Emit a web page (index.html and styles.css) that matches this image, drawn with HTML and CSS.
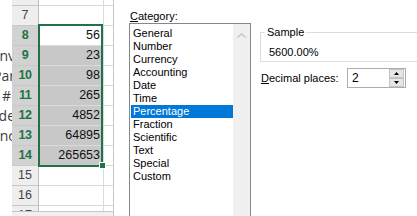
FILE: index.html
```html
<!DOCTYPE html>
<html>
<head>
<meta charset="utf-8">
<link rel="stylesheet" href="styles.css">
</head>
<body>
  <div class="behind">
    <span class="frag cut">Conv</span>
    <span class="frag cut">Par</span>
    <span class="frag hash">#</span>
    <span class="frag cut">Mode</span>
    <span class="frag cut">Func</span>
  </div>

  <div class="sheet">
    <div class="rows">
      <div class="row"><div class="rh">6</div><div class="cell"></div><div class="cell next"></div></div>
      <div class="row"><div class="rh">7</div><div class="cell"></div><div class="cell next"></div></div>
      <div class="row"><div class="rh sel">8</div><div class="cell">56</div><div class="cell next"></div></div>
      <div class="row"><div class="rh sel">9</div><div class="cell sel">23</div><div class="cell next"></div></div>
      <div class="row"><div class="rh sel">10</div><div class="cell sel">98</div><div class="cell next"></div></div>
      <div class="row"><div class="rh sel">11</div><div class="cell sel">265</div><div class="cell next"></div></div>
      <div class="row"><div class="rh sel">12</div><div class="cell sel">4852</div><div class="cell next"></div></div>
      <div class="row"><div class="rh sel">13</div><div class="cell sel">64895</div><div class="cell next"></div></div>
      <div class="row"><div class="rh sel">14</div><div class="cell sel">265653</div><div class="cell next"></div></div>
      <div class="row"><div class="rh">15</div><div class="cell"></div><div class="cell next"></div></div>
      <div class="row"><div class="rh">16</div><div class="cell"></div><div class="cell next"></div></div>
      <div class="row"><div class="rh">17</div><div class="cell"></div><div class="cell next"></div></div>
    </div>
    <div class="hscroll"></div>
    <div class="selection"></div>
    <div class="fill-handle"></div>
  </div>

  <div class="dialog">
    <div class="category">
      <div class="cat-label"><u>C</u>ategory:</div>
      <div class="listbox">
        <div class="items">
          <div class="item">General</div>
          <div class="item">Number</div>
          <div class="item">Currency</div>
          <div class="item">Accounting</div>
          <div class="item">Date</div>
          <div class="item">Time</div>
          <div class="item selected">Percentage</div>
          <div class="item">Fraction</div>
          <div class="item">Scientific</div>
          <div class="item">Text</div>
          <div class="item">Special</div>
          <div class="item">Custom</div>
        </div>
        <div class="vscroll">
          <svg width="9" height="5" viewBox="0 0 9 5"><polyline points="0.5,4.5 4.5,0.8 8.5,4.5" fill="none" stroke="#c2c2c2" stroke-width="1.2"/></svg>
        </div>
      </div>
    </div>

    <div class="right">
      <fieldset class="sample">
        <legend>Sample</legend>
        <div class="sample-value">5600.00%</div>
      </fieldset>
      <div class="decimal">
        <div class="dec-label"><u>D</u>ecimal places:</div>
        <div class="spin">
          <div class="spin-value">2</div>
          <div class="spin-btns">
            <div class="spin-btn"><svg width="5" height="3" viewBox="0 0 5 3"><polygon points="0,3 2.5,0 5,3" fill="#000"/></svg></div>
            <div class="spin-btn"><svg width="5" height="3" viewBox="0 0 5 3"><polygon points="0,0 5,0 2.5,3" fill="#000"/></svg></div>
          </div>
        </div>
      </div>
    </div>
  </div>
</body>
</html>
```

FILE: styles.css
```css
* { box-sizing: border-box; }
html, body { margin: 0; }
body {
  width: 417px;
  height: 216px;
  overflow: hidden;
  background: #fff;
  display: flex;
  font-family: "Liberation Sans", Arial, sans-serif;
  color: #000;
}

/* fragments of text from the window behind */
.behind {
  width: 12px;
  flex: none;
  overflow: hidden;
  display: flex;
  flex-direction: column;
  align-items: flex-end;
  padding-top: 46px;
  font-family: "Open Sans", sans-serif;
  font-size: 14px;
  line-height: 20px;
  color: #3c3c3c;
}
.frag { white-space: nowrap; }
.frag.cut { margin-right: -3px; }
.frag.hash { margin-right: 1px; }

/* spreadsheet */
.sheet {
  width: 102px;
  flex: none;
  height: 216px;
  position: relative;
  display: flex;
  flex-direction: column;
  border-right: 1px solid #c6c6c6;
}
.rows { flex: 1; overflow: hidden; }
.row {
  display: grid;
  grid-template-columns: 27px 65px 9px;
  height: 20px;
}
.row:first-child { margin-top: -14px; }
.rh {
  background: #eeeeee;
  border-right: 1px solid #bdbdbd;
  border-bottom: 1px solid #c8c8c8;
  text-align: center;
  font-size: 12.5px;
  line-height: 19px;
  color: #444;
}
.rh.sel {
  background: #d2d2d2;
  color: #217346;
  font-weight: bold;
  letter-spacing: -0.5px;
}
.cell {
  border-right: 1px solid #dadada;
  border-bottom: 1px solid #dadada;
  text-align: right;
  padding-right: 3px;
  font-size: 12.5px;
  line-height: 19px;
  color: #111;
}
.cell.sel { background: #c8c8c8; }
.cell.next { border-right: none; }
.hscroll {
  height: 5px;
  flex: none;
  border-top: 1px solid #c6c6c6;
  background: #f0f0f0;
}
.selection {
  position: absolute;
  left: 26px;
  top: 24px;
  width: 65px;
  height: 143px;
  border: 2px solid #217346;
}
.fill-handle {
  position: absolute;
  left: 88px;
  top: 163px;
  width: 5px;
  height: 5px;
  background: #217346;
  box-shadow: 0 0 0 1px #fff;
}

/* dialog */
.dialog {
  flex: 1;
  display: flex;
  padding-left: 15px;
  font-size: 11px;
  line-height: 13px;
}
.category {
  width: 122px;
  flex: none;
  padding-top: 10px;
}
.cat-label { padding-left: 1px; height: 13px; }
.listbox {
  border: 1px solid #828790;
  height: 200px;
  display: flex;
}
.items {
  flex: 1;
  padding: 3px 0 0 1px;
}
.item {
  height: 13px;
  padding-left: 2px;
  white-space: nowrap;
}
.item.selected { background: #0078d7; color: #fff; }
.vscroll {
  width: 17px;
  flex: none;
  background: #f0f0f0;
  display: flex;
  justify-content: center;
  align-items: flex-start;
  padding-top: 9px;
}
.vscroll svg { display: block; }

.right {
  flex: 1;
  margin-left: 9px;
  padding-top: 26px;
}
.sample {
  margin: 0;
  width: 170px;
  border: 1px solid #dcdcdc;
  padding: 7px 0 2px 8px;
}
.sample legend {
  margin-left: -4px;
  padding: 0 2px;
  line-height: 13px;
}
.sample-value { height: 13px; }

.decimal {
  display: flex;
  align-items: center;
  margin-top: 6px;
  height: 20px;
}
.dec-label { width: 87px; padding-left: 1px; }
.spin {
  width: 59px;
  height: 20px;
  border: 1px solid #abadb3;
  display: flex;
}
.spin-value {
  flex: 1;
  padding-left: 4px;
  font-size: 12px;
  line-height: 18px;
}
.spin-btns {
  width: 15px;
  margin-right: 1px;
  display: flex;
  flex-direction: column;
}
.spin-btn {
  flex: 1;
  background: #e6e6e6;
  border: 1px solid #c4c4c4;
  display: flex;
  align-items: center;
  justify-content: center;
}
.spin-btn svg { display: block; }
```
